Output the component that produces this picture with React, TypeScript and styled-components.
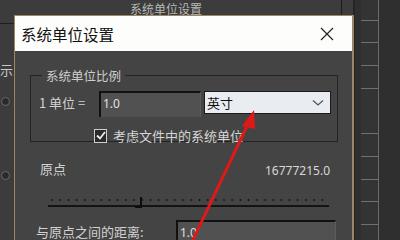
import styled, { createGlobalStyle } from 'styled-components';

const GlobalStyle = createGlobalStyle`
  * { margin: 0; padding: 0; box-sizing: border-box; }
  body {
    font-family: "Noto Sans CJK SC", "Noto Sans", sans-serif;
    background: #3b3b3b;
    overflow: hidden;
  }
`;

const Screen = styled.div`
  position: relative;
  width: 400px;
  height: 240px;
  overflow: hidden;
  background: #3c3c3c;
  display: flex;
`;

const BackPanel = styled.div`
  flex: 1;
  position: relative;
  border-right: 1px solid #242424;
`;

const BackTitle = styled.div`
  padding: 2px 0 0 130px;
  font-size: 12px;
  line-height: 14px;
  color: #b8b8b8;
  height: 24px;
  border-bottom: 1px solid #1e1e1e;
  white-space: nowrap;
`;

const BackDivider = styled.span`
  position: absolute;
  left: 341px;
  top: 0;
  width: 1px;
  height: 16px;
  background: #1c1c1c;
`;

const BackLabel = styled.div`
  margin-top: 36px;
  font-size: 13px;
  color: #c8c8c8;
`;

const Radio = styled.span<{ $top: number }>`
  position: absolute;
  left: 1px;
  top: ${p => p.$top}px;
  width: 9px;
  height: 9px;
  border-radius: 50%;
  background: #2a2a2a;
  border: 1px solid #6a6a6a;
`;

const Ruler = styled.div`
  width: 46px;
  display: flex;
  background: #2f2f2f;
  border-left: 1px solid #262626;
`;

const RulerStrip = styled.div`
  margin-left: 6px;
  width: 18px;
  border-right: 1px solid #6a6a6a;
  background: repeating-linear-gradient(
    to bottom,
    #343434 0px,
    #343434 21.7px,
    #707070 21.7px,
    #707070 22.7px
  );
  background-position: 0 -2px;
`;

const Dialog = styled.div`
  position: absolute;
  left: 14px;
  top: 15px;
  width: 340px;
  height: 240px;
  border: 1px solid #9a8864;
  border-right-width: 2px;
  background: #444444;
  display: flex;
  flex-direction: column;
`;

const TitleBar = styled.div`
  height: 35px;
  background: #fdfdfb;
  display: flex;
  align-items: center;
  justify-content: space-between;
  padding: 0 18px 0 6px;
  font-size: 15.5px;
  color: #111;
`;

const Close = styled.svg`
  width: 14px;
  height: 14px;
`;

const Body = styled.div`
  padding: 15px 14px 0 15px;
  display: flex;
  flex-direction: column;
`;

const Group = styled.fieldset`
  border: 1px solid #242424;
  height: 76px;
  padding: 6px 6px 0 5px;
`;

const Legend = styled.legend`
  margin-left: 6px;
  padding: 0 4px;
  font-size: 12.5px;
  color: #cfcfcf;
`;

const Row = styled.div`
  display: flex;
  align-items: flex-start;
`;

const Label = styled.span<{ $w?: number }>`
  font-size: 13px;
  color: #d2d2d2;
  width: ${p => (p.$w ? `${p.$w}px` : 'auto')};
  line-height: 24px;
  white-space: nowrap;
`;

const Field = styled.div<{ $w: number; $h: number }>`
  width: ${p => p.$w}px;
  height: ${p => p.$h}px;
  background: #515151;
  border-top: 2px solid #111;
  border-left: 2px solid #111;
  border-right: 1px solid #5c5c5c;
  font-family: "Noto Sans", sans-serif;
  font-size: 12px;
  color: #e0e0e0;
  padding: 2px 0 0 2px;
  line-height: 18px;
`;

const Select = styled.div`
  margin-left: 3px;
  width: 127px;
  height: 23px;
  background: #e9edf2;
  border: 1px solid #1a1a1a;
  display: flex;
  align-items: center;
  justify-content: space-between;
  padding: 0 6px 0 2px;
  font-size: 13px;
  color: #111;
`;

const CheckRow = styled.div`
  display: flex;
  align-items: center;
  gap: 6px;
  margin: 9px 0 0 58px;
  font-size: 13px;
  color: #d6d6d6;
`;

const Box = styled.span`
  width: 13px;
  height: 14px;
  border: 1px solid #cfcfcf;
  background: #2a2a2a;
  display: flex;
  align-items: center;
  justify-content: center;
`;

const OriginRow = styled.div`
  display: flex;
  justify-content: space-between;
  padding: 15px 8px 0 10px;
`;

const Value = styled.span`
  font-family: "Noto Sans", sans-serif;
  font-size: 12px;
  color: #d8d8d8;
  margin-top: 5px;
`;

const Slider = styled.div`
  position: relative;
  margin: 16px 9px 0 18px;
  height: 12px;
`;

const Dots = styled.div`
  height: 2px;
  margin-top: 2px;
  background: radial-gradient(circle, #151515 0.9px, transparent 1.1px) 0 0 / 8.2px 2px repeat-x;
`;

const Track = styled.div`
  height: 2px;
  margin-top: 4px;
  background: #141414;
`;

const Thumb = styled.span`
  position: absolute;
  left: 87px;
  top: 0;
  width: 7px;
  height: 11px;
  border-right: 2px solid #0d0d0d;
  border-bottom: 2px solid #0d0d0d;
`;

const DistanceRow = styled.div`
  display: flex;
  align-items: flex-start;
  margin-top: 11px;
  padding-left: 6px;
`;

const DistanceLabel = styled(Label)`
  line-height: 20px;
  padding-top: 2px;
`;

const Arrow = styled.svg`
  position: absolute;
  left: 0;
  top: 0;
  pointer-events: none;
`;

export default function App() {
  return (
    <>
      <GlobalStyle />
      <Screen>
        <BackPanel>
          <BackTitle>系统单位设置</BackTitle>
          <BackDivider />
          <BackLabel>示</BackLabel>
          <Radio $top={97} />
          <Radio $top={171} />
        </BackPanel>
        <Ruler>
          <RulerStrip />
        </Ruler>

        <Dialog>
          <TitleBar>
            <span>系统单位设置</span>
            <Close viewBox="0 0 14 14">
              <path d="M1 1 L13 13 M13 1 L1 13" stroke="#222" strokeWidth="1.2" fill="none" />
            </Close>
          </TitleBar>
          <Body>
            <Group>
              <Legend>系统单位比例</Legend>
              <Row>
                <Label $w={63}>&nbsp;1 单位 =</Label>
                <Field $w={102} $h={26}>1.0</Field>
                <Select>
                  <span>英寸</span>
                  <svg width="12" height="8" viewBox="0 0 12 8">
                    <path d="M1 1.5 L6 6 L11 1.5" stroke="#555" strokeWidth="1.3" fill="none" />
                  </svg>
                </Select>
              </Row>
              <CheckRow>
                <Box>
                  <svg width="10" height="9" viewBox="0 0 10 9">
                    <path d="M1 4.5 L4 7.5 L9 1" stroke="#eee" strokeWidth="1.8" fill="none" />
                  </svg>
                </Box>
                <span>考虑文件中的系统单位</span>
              </CheckRow>
            </Group>

            <OriginRow>
              <Label>原点</Label>
              <Value>16777215.0</Value>
            </OriginRow>

            <Slider>
              <Dots />
              <Track />
              <Thumb />
            </Slider>

            <DistanceRow>
              <DistanceLabel $w={140}>与原点之间的距离:</DistanceLabel>
              <Field $w={160} $h={24}>1.0</Field>
            </DistanceRow>
          </Body>
        </Dialog>

        <Arrow width="400" height="240" viewBox="0 0 400 240">
          <line x1="192" y1="242" x2="248" y2="124" stroke="#e01818" strokeWidth="3" />
          <polygon points="254,110 242,126 255,129" fill="#e01818" />
        </Arrow>
      </Screen>
    </>
  );
}
